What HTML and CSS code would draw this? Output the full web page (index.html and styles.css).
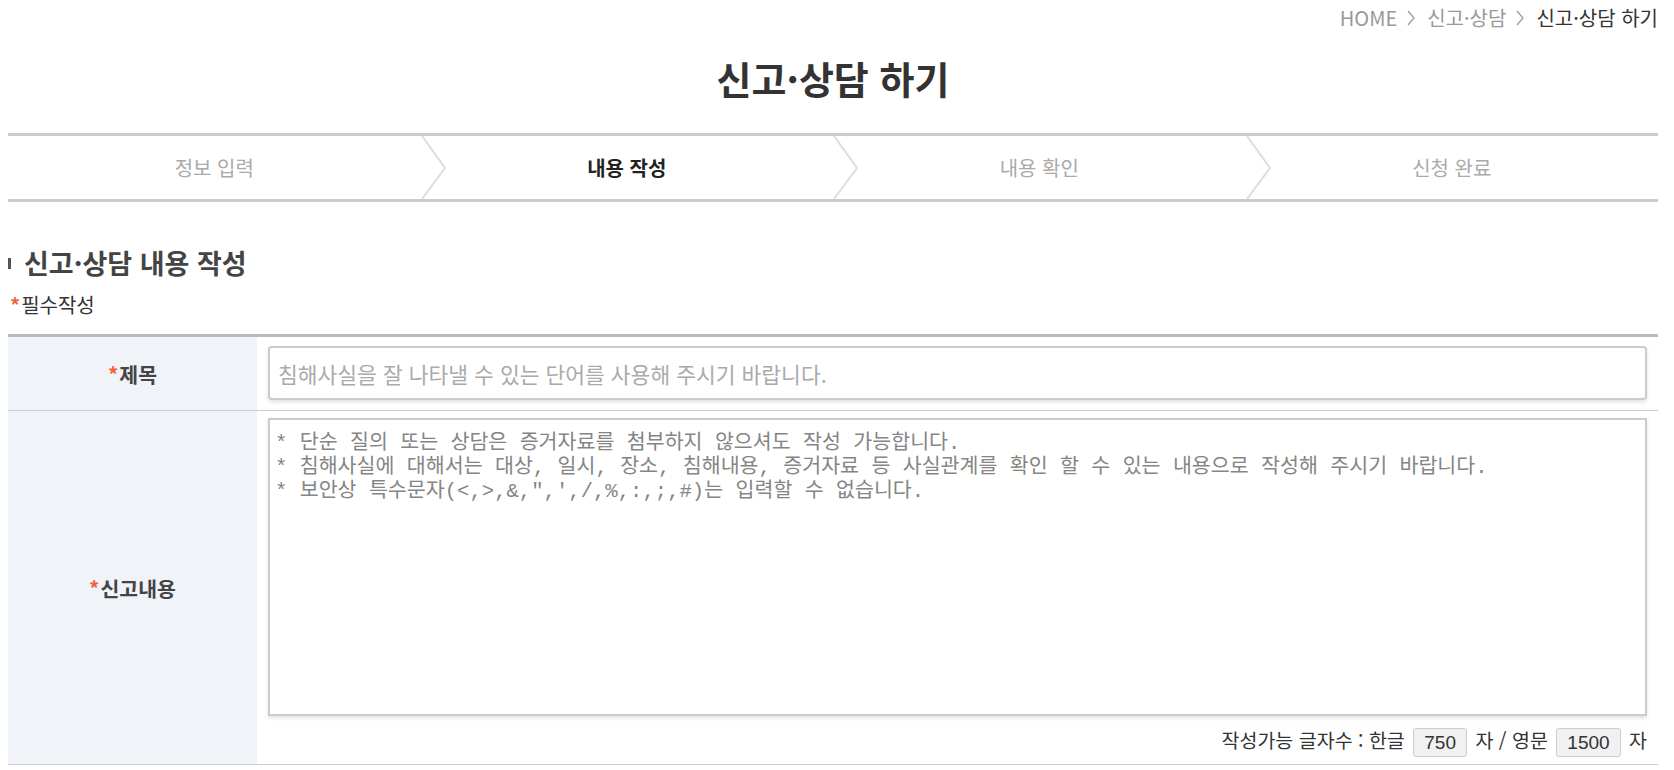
FILE: index.html
```html
<!DOCTYPE html>
<html lang="ko">
<head>
  <meta charset="UTF-8">
  <meta name="viewport" content="width=device-width, initial-scale=1.0">
  <title>신고·상담 하기</title>
  <link rel="stylesheet" href="styles.css">
</head>
<body>
  <div class="wrap">
    <div class="breadcrumb">
      <span>HOME</span>
      <svg class="crumb-arrow" viewBox="0 0 8 16"><polyline points="1,1 7,8 1,15"/></svg>
      <span>신고·상담</span>
      <svg class="crumb-arrow" viewBox="0 0 8 16"><polyline points="1,1 7,8 1,15"/></svg>
      <span class="current">신고·상담 하기</span>
    </div>

    <h1 class="page-title">신고·상담 하기</h1>

    <ol class="steps">
      <li>정보 입력<svg class="step-arrow" viewBox="0 0 26 63"><polyline points="1,0 24,32 1,63"/></svg></li>
      <li class="active">내용 작성<svg class="step-arrow" viewBox="0 0 26 63"><polyline points="1,0 24,32 1,63"/></svg></li>
      <li>내용 확인<svg class="step-arrow" viewBox="0 0 26 63"><polyline points="1,0 24,32 1,63"/></svg></li>
      <li>신청 완료</li>
    </ol>

    <h2 class="section-title">신고·상담 내용 작성</h2>
    <p class="required-note"><span class="star">*</span>필수작성</p>

    <table class="form-table">
      <tr>
        <th><span class="star">*</span>제목</th>
        <td class="title-cell">
          <input type="text" class="text-input" placeholder="침해사실을 잘 나타낼 수 있는 단어를 사용해 주시기 바랍니다.">
        </td>
      </tr>
      <tr>
        <th><span class="star">*</span>신고내용</th>
        <td class="content-cell">
          <textarea class="content-input">* 단순 질의 또는 상담은 증거자료를 첨부하지 않으셔도 작성 가능합니다.
* 침해사실에 대해서는 대상, 일시, 장소, 침해내용, 증거자료 등 사실관계를 확인 할 수 있는 내용으로 작성해 주시기 바랍니다.
* 보안상 특수문자(&lt;,&gt;,&amp;,",',/,%,:,;,#)는 입력할 수 없습니다.</textarea>
          <div class="counter">작성가능 글자수 : 한글 <span class="count-box">750</span> 자 / 영문 <span class="count-box">1500</span> 자</div>
        </td>
      </tr>
    </table>
  </div>
</body>
</html>
```

FILE: styles.css
```css
* {
  box-sizing: border-box;
  margin: 0;
  padding: 0;
}

body {
  margin: 8px;
  background-color: #fff;
  color: #333;
  font-family: "Noto Sans CJK KR", "Noto Sans", sans-serif;
}

.wrap {
  width: 1650px;
}

/* breadcrumb */
.breadcrumb {
  display: flex;
  justify-content: flex-end;
  align-items: center;
  font-size: 20px;
  line-height: 20px;
  color: #999;
}

.crumb-arrow {
  width: 8px;
  height: 16px;
  margin: 0 12px 0 10px;
  fill: none;
  stroke: #999;
  stroke-width: 1.2;
}

.breadcrumb .current {
  color: #333;
}

/* title */
.page-title {
  margin-top: 25px;
  font-size: 38px;
  line-height: 50px;
  font-weight: bold;
  text-align: center;
  color: #333;
}

/* steps */
.steps {
  margin-top: 30px;
  list-style: none;
  display: grid;
  grid-template-columns: repeat(4, 1fr);
  border-top: 3px solid #ccc;
  border-bottom: 3px solid #ccc;
}

.steps li {
  position: relative;
  height: 63px;
  display: flex;
  align-items: center;
  justify-content: center;
  font-size: 20px;
  color: #aaa;
}

.steps li.active {
  color: #222;
  font-weight: bold;
}

.step-arrow {
  position: absolute;
  top: 0;
  left: 100%;
  width: 26px;
  height: 63px;
  fill: none;
  stroke: #ddd;
  stroke-width: 2;
}

/* section */
.section-title {
  margin-top: 45px;
  display: flex;
  align-items: center;
  font-size: 27px;
  line-height: 32px;
  font-weight: bold;
  color: #444;
}

.section-title::before {
  content: "";
  width: 3px;
  height: 11px;
  margin-right: 13px;
  background-color: #555;
}

.required-note {
  margin-top: 14px;
  font-size: 20px;
  line-height: 24px;
  color: #333;
}

.star {
  color: #f0643c;
  font-weight: bold;
  margin-right: 1px;
}

.required-note .star {
  margin-left: 2px;
}

/* form table */
.form-table {
  margin-top: 17px;
  width: 100%;
  border-spacing: 0;
  border-top: 3px solid #bbb;
}

.form-table th {
  width: 249px;
  background-color: #f0f3f8;
  border-bottom: 1px solid #c8cdd5;
  font-size: 20.5px;
  font-weight: bold;
  color: #444;
  vertical-align: middle;
}

.form-table td {
  border-bottom: 1px solid #c8cdd5;
  padding: 0 11px;
}

.title-cell {
  padding-top: 9px !important;
  padding-bottom: 10px !important;
}

.text-input {
  display: block;
  width: 100%;
  height: 54px;
  padding: 0 8px;
  border: 2px solid #ccc;
  border-radius: 4px;
  box-shadow: 0 2px 4px rgba(0, 0, 0, 0.12);
  font-family: inherit;
  font-size: 21.5px;
  color: #333;
  outline: none;
}

.text-input::placeholder {
  color: #aaa;
}

.content-cell {
  padding-top: 7px !important;
  padding-bottom: 9px !important;
}

.content-input {
  display: block;
  width: 100%;
  height: 298px;
  padding: 12px 5px;
  border: 2px solid #ccc;
  box-shadow: 0 2px 4px rgba(0, 0, 0, 0.12);
  font-family: "Liberation Mono", "Noto Sans CJK KR", monospace;
  font-size: 20.6px;
  line-height: 24px;
  color: #858585;
  resize: none;
  outline: none;
}

.counter {
  margin-top: 9px;
  height: 30px;
  line-height: 30px;
  text-align: right;
  font-size: 19.5px;
  color: #333;
}

.count-box {
  display: inline-block;
  height: 29px;
  padding: 0 10px;
  margin: 0 3px;
  line-height: 27px;
  vertical-align: middle;
  border: 1px solid #ccc;
  border-radius: 3px;
  background-color: #f1f1f1;
  font-family: "Liberation Sans", sans-serif;
  font-size: 19px;
}
```
